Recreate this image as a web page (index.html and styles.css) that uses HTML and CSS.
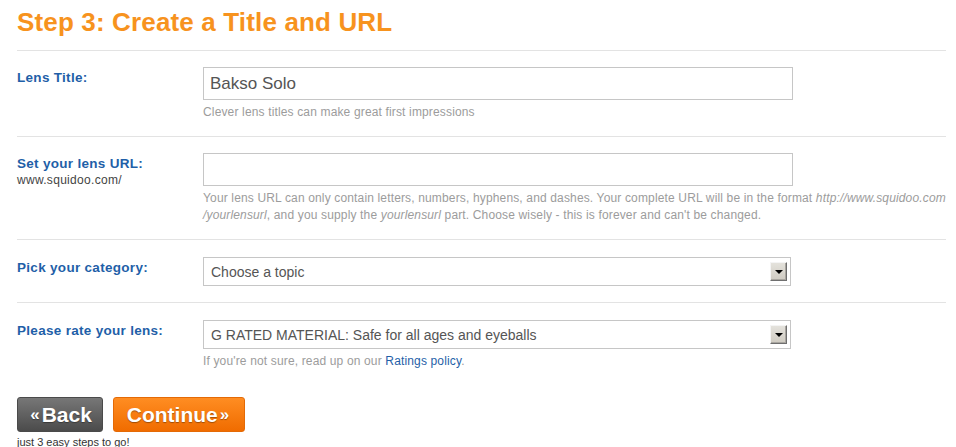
FILE: index.html
```html
<!DOCTYPE html>
<html lang="en">
<head>
<meta charset="utf-8">
<title>Step 3: Create a Title and URL</title>
<link rel="stylesheet" href="styles.css">
</head>
<body>
<div class="page">
  <h1 class="title">Step 3: Create a Title and URL</h1>

  <div class="row">
    <div class="label"><span class="label-text">Lens Title:</span></div>
    <div class="field">
      <input class="textbox" type="text" value="Bakso Solo">
      <p class="help">Clever lens titles can make great first impressions</p>
    </div>
  </div>

  <div class="row">
    <div class="label">
      <span class="label-text">Set your lens URL:</span>
      <span class="label-sub">www.squidoo.com/</span>
    </div>
    <div class="field">
      <input class="textbox" type="text" value="">
      <p class="help">Your lens URL can only contain letters, numbers, hyphens, and dashes. Your complete URL will be in the format <i>http://www.squidoo.com</i><br><i>/yourlensurl</i>, and you supply the <i>yourlensurl</i> part. Choose wisely - this is forever and can't be changed.</p>
    </div>
  </div>

  <div class="row row-select">
    <div class="label"><span class="label-text">Pick your category:</span></div>
    <div class="field">
      <div class="select">
        <span class="select-text">Choose a topic</span>
        <span class="select-btn"><span class="tri"></span></span>
      </div>
    </div>
  </div>

  <div class="row row-select row-last">
    <div class="label"><span class="label-text">Please rate your lens:</span></div>
    <div class="field">
      <div class="select">
        <span class="select-text">G RATED MATERIAL: Safe for all ages and eyeballs</span>
        <span class="select-btn"><span class="tri"></span></span>
      </div>
      <p class="help">If you're not sure, read up on our <a class="link" href="#">Ratings policy</a>.</p>
    </div>
  </div>

  <div class="actions">
    <a class="btn btn-back" href="#"><span class="raquo">«</span>Back</a>
    <a class="btn btn-continue" href="#">Continue <span class="raquo">»</span></a>
  </div>
  <p class="note">just 3 easy steps to go!</p>
</div>
</body>
</html>
```

FILE: styles.css
```css
* { box-sizing: border-box; }

html, body {
  margin: 0;
  padding: 0;
  background: #ffffff;
}

body {
  font-family: "Liberation Sans", Arial, sans-serif;
  color: #333;
  overflow: hidden;
}

.page {
  width: 946px;
  padding-left: 17px;
}

.title {
  margin: 0;
  padding: 7px 0 13px;
  font-size: 26px;
  line-height: 30px;
  font-weight: bold;
  letter-spacing: 0.15px;
  color: #f7931e;
  border-bottom: 1px solid #e3e3e3;
}

.row {
  display: grid;
  grid-template-columns: 186px 1fr;
  padding: 16px 0 15px;
  border-bottom: 1px solid #e3e3e3;
}

.row-select {
  padding-top: 17px;
  padding-bottom: 16px;
}

.row-last {
  border-bottom: none;
  padding-bottom: 0;
}

.label {
  display: flex;
  flex-direction: column;
  padding-top: 3px;
}

.label-text {
  font-size: 13.5px;
  line-height: 16px;
  font-weight: bold;
  letter-spacing: 0.3px;
  color: #1f5fa8;
}

.label-sub {
  font-size: 12px;
  line-height: 16px;
  letter-spacing: 0.3px;
  color: #444;
}

.field {
  display: flex;
  flex-direction: column;
}

.textbox {
  display: block;
  width: 590px;
  height: 33px;
  margin: 0;
  padding: 0 6px;
  border: 1px solid #c6c6c6;
  background: #fff;
  font-family: "Liberation Sans", Arial, sans-serif;
  font-size: 17px;
  color: #555;
  outline: none;
}

.help {
  margin: 4px 0 0;
  font-size: 12px;
  line-height: 17px;
  letter-spacing: 0.15px;
  color: #9c9c9c;
}

.link {
  color: #1f5fa8;
  text-decoration: none;
}

.select {
  display: flex;
  align-items: center;
  justify-content: space-between;
  width: 588px;
  height: 29px;
  padding: 0 3px 0 7px;
  border: 1px solid #c6c6c6;
  background: #fff;
}

.select-text {
  font-size: 14px;
  color: #555;
}

.select-btn {
  display: flex;
  align-items: center;
  justify-content: center;
  width: 17px;
  height: 19px;
  background: linear-gradient(#e4e2dc, #cfcbc2);
  border-top: 1px solid #f4f4f4;
  border-left: 1px solid #f4f4f4;
  border-right: 1px solid #6f6f6f;
  border-bottom: 1px solid #6f6f6f;
  box-shadow: inset -1px -1px 0 #a9a6a0;
}

.tri {
  width: 0;
  height: 0;
  border-left: 4px solid transparent;
  border-right: 4px solid transparent;
  border-top: 4px solid #000;
  margin-top: 1px;
}

.actions {
  display: flex;
  gap: 10px;
  margin-top: 27px;
}

.btn {
  display: flex;
  align-items: center;
  justify-content: center;
  height: 35px;
  padding: 0 10px;
  border-radius: 3px;
  font-size: 21px;
  font-weight: bold;
  color: #fff;
  text-decoration: none;
  text-shadow: 0 1px 1px rgba(0, 0, 0, 0.35);
}

.btn-back {
  width: 86px;
  background: linear-gradient(#777777, #4b4b4b);
  border: 1px solid #4a4a4a;
}

.btn-continue {
  width: 132px;
  background: linear-gradient(#ff8d22, #f06c00);
  border: 1px solid #e46a06;
}

.raquo {
  font-size: 17px;
  margin: 0 2px;
}

.note {
  margin: 3px 0 0;
  font-size: 11px;
  line-height: 14px;
  color: #333;
}
```
